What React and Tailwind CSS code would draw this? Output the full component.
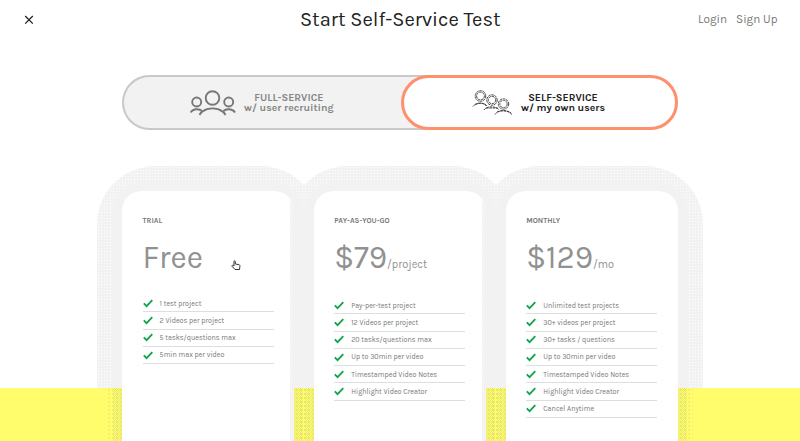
import React from "react";

function Trio() {
  return (
    <svg width="46" height="26" viewBox="0 0 46 26" fill="none" stroke="#777" strokeWidth="1.900">
      <circle cx="22.500" cy="8" r="6.800" />
      <circle cx="6.700" cy="12" r="4.500" />
      <circle cx="38.700" cy="12" r="4.500" />
      <path d="M9.500 25c.8-1.800 1.800-2.800 3-3.600 5.500-4 14.500-4 20 0 1.200.8 2.200 1.800 3 3.600" />
      <path d="M.8 22.500c1.500-3.500 8-4.500 11.200-1.500M33.500 21c3-3 9.500-2 11.500 1.500" />
    </svg>
  );
}

function Queue() {
  return (
    <svg width="42" height="28" viewBox="0 0 42 28" fill="none" stroke="#333" strokeWidth="0.900" strokeDasharray="2.600 .7">
      <circle cx="8.500" cy="7" r="5.300" />
      <circle cx="8.500" cy="7" r="3.900" />
      <path d="M1 17.500c2-3.500 11-5 14-.5M3 15.500c3-2 8-2 11 1" />
      <circle cx="20" cy="11" r="5.200" />
      <circle cx="20" cy="11" r="3.700" />
      <path d="M12 21c2-4 12-4.500 15 0M14 19h12" />
      <circle cx="31.500" cy="15" r="5.200" />
      <circle cx="31.500" cy="15" r="3.700" />
      <path d="M23 25.500c3-5 13-5 17 0M25 23c4-2 10-2 14 1" />
    </svg>
  );
}

function Hand() {
  return (
    <svg className="absolute left-[109px] top-[69px]" width="10" height="11" viewBox="0 0 10 11" fill="#fff" stroke="#333" strokeWidth="1">
      <path d="M3 6V1.500c0-1 1.300-1 1.300 0V4l3.500.6c1 .2 1.200.8 1.100 1.700L8.500 9.500H4L1 6.300c-.5-.8.500-1.300 1.200-.8z" />
    </svg>
  );
}

function Check() {
  return (
    <svg width="10" height="9" viewBox="0 0 10 9" fill="none" stroke="#0fa54a" strokeWidth="1.800">
      <path d="M.8 4.300 3.600 7.200 9.300 1.200" />
    </svg>
  );
}

/* Dotted outer glow, and the narrower dotted glow over the yellow band. */
function Halo() {
  return (
    <>
      <div className="absolute -left-[25px] -top-[25px] h-[222px] w-[222px] rounded-t-[58px] bg-[radial-gradient(#ffffff_0.7px,#f2f2f2_0.8px)] bg-[size:3px_3px]" />
      <div className="absolute -left-[15px] bottom-0 h-[53px] w-[202px] bg-[radial-gradient(#d8d57060_0.7px,transparent_0.8px)] bg-[size:4px_4px]" />
      <div className="absolute -left-[9px] bottom-0 h-[53px] w-[190px] bg-[repeating-conic-gradient(#d8d57088_0_25%,transparent_0_50%)] bg-[size:2px_2px]" />
    </>
  );
}

function Card({ name, price, unit, items, top, left, strip, hand }) {
  return (
    <div className="relative h-[250px] w-[172px]">
      <div className={`relative h-full overflow-hidden rounded-t-[20px] bg-white pt-[24px] text-[#777] ${left}`}>
        <div className="text-[7.500px] font-bold leading-[12px]">{name}</div>
        <div className="mt-[13px] flex h-[36px] items-baseline text-[#919191]">
          <span className="text-[31.500px] leading-[36px]">{price}</span>
          <span className="text-[11px]">{unit}</span>
        </div>
        <div className={top}>
          {items.map((t) => (
            <div key={t} className="flex h-[17.300px] w-[131px] items-center border-b border-[#dedede] text-[7.200px]">
              <Check />
              <span className="ml-[7px] whitespace-nowrap pt-[1.500px]">{t}</span>
            </div>
          ))}
        </div>
        {hand && <Hand />}
        {strip && <div className="absolute bottom-0 right-0 top-[10px] w-[4px] bg-[radial-gradient(#ffffff_0.7px,#f2f2f2_0.8px)] bg-[size:3px_3px]" />}
      </div>
    </div>
  );
}

const plans = [
  { name: "TRIAL", price: "Free", unit: "", top: "mt-[19px]", left: "pl-[20.600px]", strip: true, hand: true, items: ["1 test project", "2 Videos per project", "5 tasks/questions max", "5min max per video"] },
  { name: "PAY-AS-YOU-GO", price: "$79", unit: "/project", top: "mt-[21px]", left: "pl-[20.200px]", strip: true, items: ["Pay-per-test project", "12 Videos per project", "20 tasks/questions max", "Up to 30min per video", "Timestamped Video Notes", "Highlight Video Creator"] },
  { name: "MONTHLY", price: "$129", unit: "/mo", top: "mt-[21px]", left: "pl-[20.200px]", items: ["Unlimited test projects", "30+ videos per project", "30+ tasks / questions", "Up to 30min per video", "Timestamped Video Notes", "Highlight Video Creator", "Cancel Anytime"] },
];

export default function App() {
  return (
    <div className="relative h-[441px] w-[800px] overflow-hidden bg-white font-['Karla','Work_Sans','Inter',sans-serif]">
      <div className="absolute inset-x-0 bottom-0 h-[53px] bg-[#fffd6b]" />
      <header className="relative grid h-[40px] grid-cols-3 items-center pl-[23px] pr-[22.500px]">
        <svg width="12" height="12" viewBox="0 0 12 12" stroke="#222" strokeWidth="1.300"><path d="m2.200 2 7.600 7.600M9.800 2 2.200 9.600" /></svg>
        <h1 className="whitespace-nowrap pt-[1px] text-center text-[20.100px] text-[#222]">Start Self-Service Test</h1>
        <nav className="flex justify-end gap-[9px] text-[11.700px] text-[#777]"><span>Login</span><span>Sign Up</span></nav>
      </header>
      <div className="relative ml-[122px] mt-[35px] flex h-[55px] w-[556px] rounded-full bg-[#f2f2f2]">
        <div className="flex h-[55px] w-[320px] items-center rounded-l-full border-2 border-r-0 border-[#c9c9c9] pl-[66px] text-[#858585]">
          <Trio />
          <div className="ml-[8px] text-center text-[10.500px] font-bold leading-[10px]"><div>FULL-SERVICE</div><div>w/ user recruiting</div></div>
        </div>
        <div className="-ml-[41px] flex h-[55px] w-[277px] items-center rounded-full border-[3px] border-[#ff906d] bg-white pl-[68px] text-[#222]">
          <Queue />
          <div className="ml-[7px] text-center text-[10.500px] font-bold leading-[10px]"><div>SELF-SERVICE</div><div>w/ my own users</div></div>
        </div>
      </div>
      <div className="relative ml-[122px] mt-[61px] h-[250px]">
        <div className="absolute inset-0 flex gap-[20px]">
          {plans.map((p) => (
            <div key={p.name} className="relative h-[250px] w-[172px] shrink-0"><Halo /></div>
          ))}
        </div>
        <div className="absolute inset-0 flex gap-[20px]">
          {plans.map((p) => (
            <div key={p.name} className="relative h-[197px] w-[172px] shrink-0"><div className="absolute bottom-0 -left-[10px] -top-[10px] w-[192px] rounded-t-[34px] bg-[#f2f2f2]" /></div>
          ))}
        </div>
        <div className="relative flex gap-[20px]">
          {plans.map((p) => <Card key={p.name} {...p} />)}
        </div>
      </div>
    </div>
  );
}
